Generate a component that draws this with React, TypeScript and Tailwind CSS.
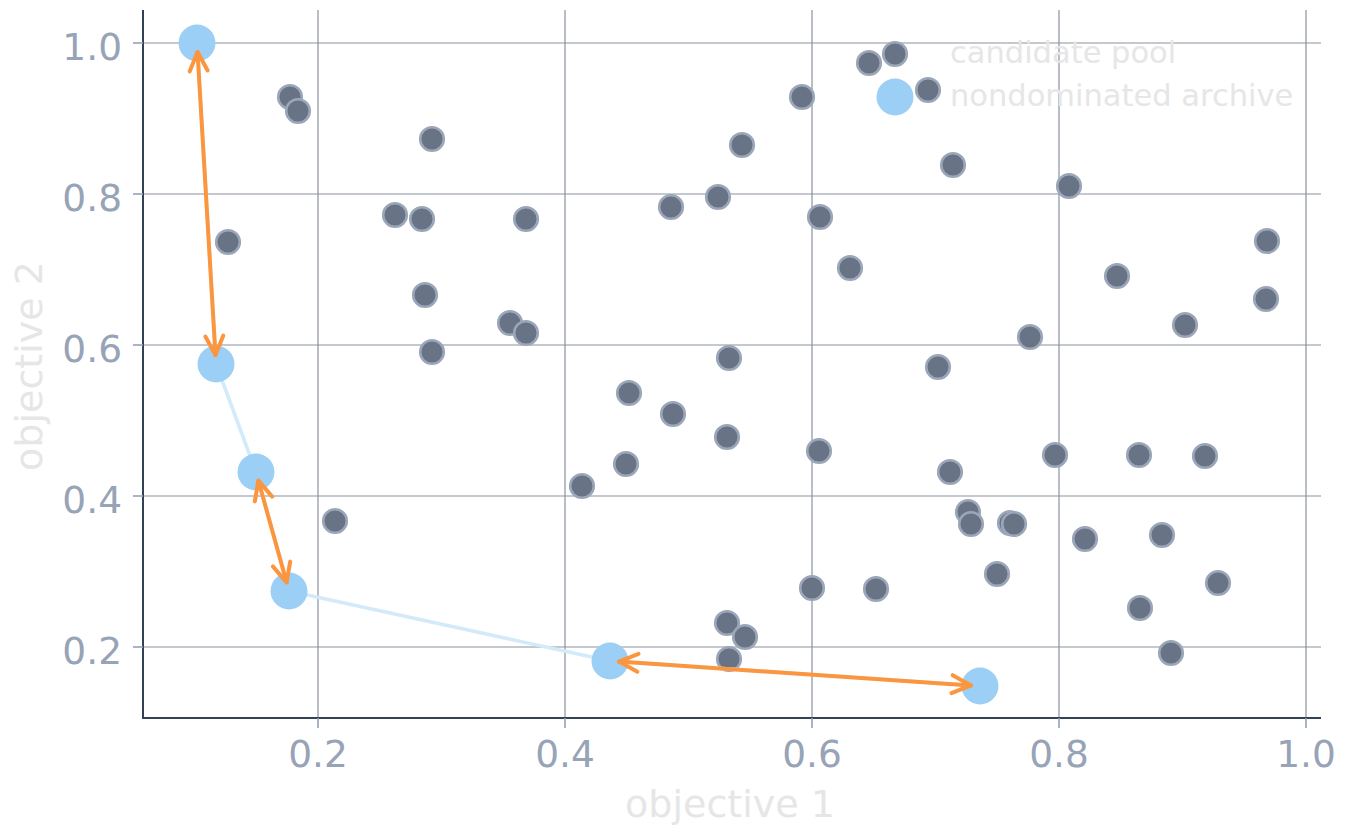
import React from "react";

// pixel mapping of the axes (measured from the figure)
const X_TICKS = [
  { v: "0.2", x: 318 },
  { v: "0.4", x: 565 },
  { v: "0.6", x: 812 },
  { v: "0.8", x: 1059 },
  { v: "1.0", x: 1306 },
];
const Y_TICKS = [
  { v: "1.0", y: 43 },
  { v: "0.8", y: 194 },
  { v: "0.6", y: 345 },
  { v: "0.4", y: 496 },
  { v: "0.2", y: 647 },
];

const LEFT = 143;
const RIGHT = 1321;
const TOP = 10;
const BOTTOM = 718;

const pool: [number, number][] = [
  [290, 97], [298, 111], [432, 139], [228, 242], [395, 215], [422, 219],
  [526, 219], [425, 295], [432, 352], [510, 323], [526, 333], [335, 521],
  [582, 486], [626, 464], [629, 393], [673, 414], [727, 437], [729, 358],
  [671, 207], [718, 197], [742, 145], [802, 97], [820, 217], [869, 63],
  [895, 54], [928, 90], [953, 165], [850, 268], [938, 367], [1030, 337],
  [1069, 186], [1117, 276], [1185, 325], [1267, 241], [1266, 299], [819, 451],
  [950, 472], [968, 512], [971, 524], [1010, 523], [1014, 524], [997, 574],
  [1055, 455], [1139, 455], [1205, 456], [1085, 539], [1162, 535], [1218, 583],
  [1140, 608], [1171, 653], [812, 588], [876, 589], [727, 623], [745, 637],
  [729, 659],
];

const front: [number, number][] = [
  [197, 43], [216, 364], [256, 472], [289, 591], [610, 661], [980, 686],
];
const extra: [number, number][] = [[895, 97]];

const arrows: [number, number][][] = [
  [front[0], front[1]],
  [front[2], front[3]],
  [front[4], front[5]],
];

function Arrow({ a, b }: { a: [number, number]; b: [number, number] }) {
  const dx = b[0] - a[0];
  const dy = b[1] - a[1];
  const len = Math.hypot(dx, dy);
  const ux = dx / len;
  const uy = dy / len;
  const shrink = 9;
  const p1 = [a[0] + ux * shrink, a[1] + uy * shrink];
  const p2 = [b[0] - ux * shrink, b[1] - uy * shrink];
  const hl = 19;
  const hw = 9;
  const head = (tip: number[], dirx: number, diry: number) => {
    const bx = tip[0] - dirx * hl;
    const by = tip[1] - diry * hl;
    return `M ${bx - diry * hw} ${by + dirx * hw} L ${tip[0]} ${tip[1]} L ${bx + diry * hw} ${by - dirx * hw}`;
  };
  return (
    <g stroke="#fb963f" strokeWidth={4} fill="none" strokeLinecap="round" strokeLinejoin="round">
      <line x1={p1[0]} y1={p1[1]} x2={p2[0]} y2={p2[1]} />
      <path d={head(p1, -ux, -uy)} />
      <path d={head(p2, ux, uy)} />
    </g>
  );
}

function Chart() {
  return (
    <svg width={1348} height={838} viewBox="0 0 1348 838" className="block">
      {/* grid */}
      <g stroke="#8a919f" strokeWidth={1.2}>
        {X_TICKS.map((t) => (
          <line key={t.v} x1={t.x} y1={TOP} x2={t.x} y2={BOTTOM} />
        ))}
        {Y_TICKS.map((t) => (
          <line key={t.v} x1={LEFT} y1={t.y} x2={RIGHT} y2={t.y} />
        ))}
      </g>

      {/* legend labels */}
      <g fill="#e6e6e6" fontSize={30.5} fontFamily="'DejaVu Sans', sans-serif">
        <text x={950} y={63}>candidate pool</text>
        <text x={950} y={106}>nondominated archive</text>
      </g>

      {/* candidate pool */}
      <g fill="#687386" stroke="#9ba7b9" strokeWidth={2.6}>
        {pool.map(([x, y], i) => (
          <circle key={i} cx={x} cy={y} r={11.8} />
        ))}
      </g>

      {/* front line */}
      <polyline
        points={front.map((p) => p.join(",")).join(" ")}
        fill="none"
        stroke="#d3eafb"
        strokeWidth={3.6}
      />

      {/* archive */}
      <g fill="#9bcff5">
        {[...front, ...extra].map(([x, y], i) => (
          <circle key={i} cx={x} cy={y} r={18.5} />
        ))}
      </g>

      {arrows.map((ab, i) => (
        <Arrow key={i} a={ab[0]} b={ab[1]} />
      ))}

      {/* spines */}
      <g stroke="#334155" strokeWidth={2}>
        <line x1={LEFT} y1={TOP} x2={LEFT} y2={BOTTOM + 1} />
        <line x1={LEFT - 1} y1={BOTTOM} x2={RIGHT} y2={BOTTOM} />
      </g>

      {/* ticks */}
      <g stroke="#94a3b8" strokeWidth={1.6}>
        {X_TICKS.map((t) => (
          <line key={t.v} x1={t.x} y1={BOTTOM} x2={t.x} y2={BOTTOM + 10} />
        ))}
        {Y_TICKS.map((t) => (
          <line key={t.v} x1={LEFT - 10} y1={t.y} x2={LEFT} y2={t.y} />
        ))}
      </g>

      <g fill="#97a3b6" fontSize={37.5} fontFamily="'DejaVu Sans', sans-serif">
        {X_TICKS.map((t) => (
          <text key={t.v} x={t.x} y={767} textAnchor="middle">
            {t.v}
          </text>
        ))}
        {Y_TICKS.map((t) => (
          <text key={t.v} x={122} y={t.y + 17} textAnchor="end">
            {t.v}
          </text>
        ))}
      </g>

      {/* axis labels */}
      <g fill="#e6e6e6" fontSize={38} fontFamily="'DejaVu Sans', sans-serif">
        <text x={730} y={817} textAnchor="middle">
          objective 1
        </text>
        <text x={42} y={366} textAnchor="middle" transform="rotate(-90 42 366)">
          objective 2
        </text>
      </g>
    </svg>
  );
}

export default function App() {
  return (
    <div className="w-[1348px] h-[838px] bg-white overflow-hidden">
      <Chart />
    </div>
  );
}
